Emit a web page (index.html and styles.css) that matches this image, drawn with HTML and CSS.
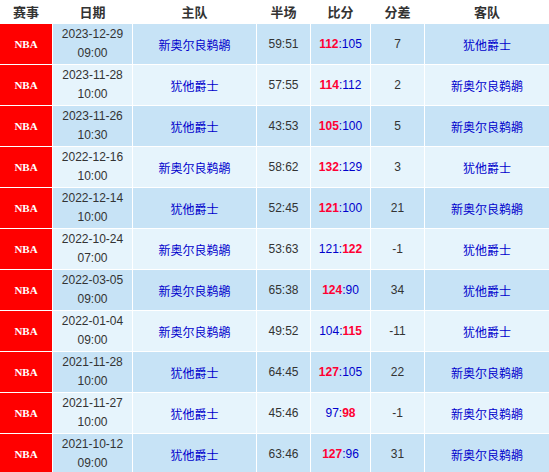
FILE: index.html
```html
<!DOCTYPE html>
<html lang="zh">
<head>
<meta charset="utf-8">
<link rel="stylesheet" href="styles.css">
</head>
<body>
<table class="tbl">
  <colgroup>
    <col class="c1"><col class="c2"><col class="c3"><col class="c4"><col class="c5"><col class="c6"><col class="c7">
  </colgroup>
  <thead>
    <tr class="head"><th>赛事</th><th>日期</th><th>主队</th><th>半场</th><th>比分</th><th>分差</th><th>客队</th></tr>
  </thead>
  <tbody>
    <tr class="odd"><td class="lg">NBA</td><td class="dt">2023-12-29<br>09:00</td><td class="tm">新奥尔良鹈鹕</td><td class="num">59:51</td><td class="sc"><b>112</b>:105</td><td class="num">7</td><td class="tm">犹他爵士</td></tr>
    <tr class="even"><td class="lg">NBA</td><td class="dt">2023-11-28<br>10:00</td><td class="tm">犹他爵士</td><td class="num">57:55</td><td class="sc"><b>114</b>:112</td><td class="num">2</td><td class="tm">新奥尔良鹈鹕</td></tr>
    <tr class="odd"><td class="lg">NBA</td><td class="dt">2023-11-26<br>10:30</td><td class="tm">犹他爵士</td><td class="num">43:53</td><td class="sc"><b>105</b>:100</td><td class="num">5</td><td class="tm">新奥尔良鹈鹕</td></tr>
    <tr class="even"><td class="lg">NBA</td><td class="dt">2022-12-16<br>10:00</td><td class="tm">新奥尔良鹈鹕</td><td class="num">58:62</td><td class="sc"><b>132</b>:129</td><td class="num">3</td><td class="tm">犹他爵士</td></tr>
    <tr class="odd"><td class="lg">NBA</td><td class="dt">2022-12-14<br>10:00</td><td class="tm">犹他爵士</td><td class="num">52:45</td><td class="sc"><b>121</b>:100</td><td class="num">21</td><td class="tm">新奥尔良鹈鹕</td></tr>
    <tr class="even"><td class="lg">NBA</td><td class="dt">2022-10-24<br>07:00</td><td class="tm">新奥尔良鹈鹕</td><td class="num">53:63</td><td class="sc">121:<b>122</b></td><td class="num">-1</td><td class="tm">犹他爵士</td></tr>
    <tr class="odd"><td class="lg">NBA</td><td class="dt">2022-03-05<br>09:00</td><td class="tm">新奥尔良鹈鹕</td><td class="num">65:38</td><td class="sc"><b>124</b>:90</td><td class="num">34</td><td class="tm">犹他爵士</td></tr>
    <tr class="even"><td class="lg">NBA</td><td class="dt">2022-01-04<br>09:00</td><td class="tm">新奥尔良鹈鹕</td><td class="num">49:52</td><td class="sc">104:<b>115</b></td><td class="num">-11</td><td class="tm">犹他爵士</td></tr>
    <tr class="odd"><td class="lg">NBA</td><td class="dt">2021-11-28<br>10:00</td><td class="tm">犹他爵士</td><td class="num">64:45</td><td class="sc"><b>127</b>:105</td><td class="num">22</td><td class="tm">新奥尔良鹈鹕</td></tr>
    <tr class="even"><td class="lg">NBA</td><td class="dt">2021-11-27<br>10:00</td><td class="tm">犹他爵士</td><td class="num">45:46</td><td class="sc">97:<b>98</b></td><td class="num">-1</td><td class="tm">新奥尔良鹈鹕</td></tr>
    <tr class="odd"><td class="lg">NBA</td><td class="dt">2021-10-12<br>09:00</td><td class="tm">犹他爵士</td><td class="num">63:46</td><td class="sc"><b>127</b>:96</td><td class="num">31</td><td class="tm">新奥尔良鹈鹕</td></tr>
  </tbody>
</table>
</body>
</html>
```
FILE: styles.css
```css
html, body {
  margin: 0;
  padding: 0;
  background: #fff;
  overflow: hidden;
}
body {
  font-family: "Liberation Sans", "Noto Sans CJK SC", sans-serif;
  font-size: 12px;
  color: #333;
}
.tbl {
  table-layout: fixed;
  border-collapse: separate;
  border-spacing: 1px;
  margin: -1px 0 0 -1px;
  width: 551px;
  background: #fff;
}
.c1 { width: 52px; }
.c2 { width: 79px; }
.c3 { width: 123px; }
.c4 { width: 53px; }
.c5 { width: 59px; }
.c6 { width: 53px; }
.c7 { width: 124px; }
th, td {
  padding: 0;
  text-align: center;
  vertical-align: middle;
}
.head th {
  height: 23px;
  font-family: "Noto Sans CJK SC", sans-serif;
  font-size: 13px;
  font-weight: bold;
  color: #333;
  background: #fff;
}
tbody td {
  height: 40px;
}
.odd td { background: #c7e3f6; }
.even td { background: #e6f4fc; }
.odd td.lg, .even td.lg {
  background: #ff0000;
  color: #fff;
  font-family: "Liberation Serif", serif;
  font-weight: bold;
  font-size: 11px;
}
.dt {
  line-height: 19px;
  color: #333;
}
.tm {
  font-family: "Noto Sans CJK SC", sans-serif;
  font-size: 12px;
  color: #0000cc;
}
.num {
  color: #333;
}
.sc {
  color: #0000cc;
}
.sc b {
  color: #ff0033;
  font-weight: bold;
}
```
